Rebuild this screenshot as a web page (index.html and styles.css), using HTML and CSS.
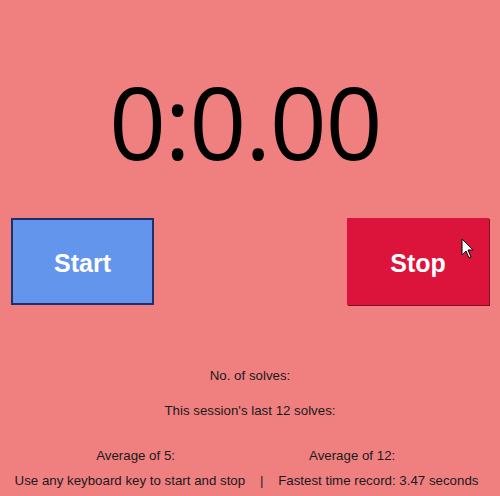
FILE: index.html
```html
<!DOCTYPE html>
<html>
<head>
<meta charset="utf-8">
<link rel="stylesheet" href="styles.css">
</head>
<body>
<div class="app">
  <div class="timer">0:0.00</div>
  <div class="buttons">
    <div class="btn start">Start</div>
    <div class="btn stop">Stop</div>
  </div>
  <div class="info">
    <div class="line solves">No. of solves:</div>
    <div class="line last">This session's last 12 solves:</div>
    <div class="avgs">
      <div class="avg a5">Average of 5:</div>
      <div class="avg a12">Average of 12:</div>
    </div>
    <div class="footer">Use any keyboard key to start and stop&nbsp;&nbsp;&nbsp;&nbsp;|&nbsp;&nbsp;&nbsp;&nbsp;Fastest time record: 3.47 seconds</div>
  </div>
  <svg class="cursor" width="14" height="22" viewBox="0 0 14 22"><path d="M1 1 L1 17 L5 13 L8 20 L10 19 L7 12 L12 12 Z" fill="#fff" stroke="#000" stroke-width="1"/></svg>
</div>
</body>
</html>
```
FILE: styles.css
```css
html, body { margin: 0; padding: 0; }
body { background: #f08080; }
.app {
  position: relative;
  width: 500px;
  height: 496px;
  background: #f08080;
  display: flex;
  flex-direction: column;
  font-family: "Liberation Sans", Arial, sans-serif;
  color: #1a1a1a;
  overflow: hidden;
}
.timer {
  font-family: "Open Sans", "Noto Sans", sans-serif;
  font-size: 100px;
  letter-spacing: -1.5px;
  line-height: 1;
  text-align: center;
  color: #000;
  margin-top: 71px;
  padding-right: 10px;
  height: 100px;
}
.buttons {
  display: flex;
  justify-content: space-between;
  padding: 0 11px;
  margin-top: 47px;
}
.btn {
  width: 143px;
  height: 87px;
  box-sizing: border-box;
  display: flex;
  align-items: center;
  justify-content: center;
  color: #fff;
  font-weight: bold;
  font-size: 25px;
  padding-top: 3px;
}
.start {
  background: #6495ed;
  border: 2px solid #1c2f6e;
}
.stop {
  width: 142px;
  background: #dc143c;
  box-shadow: 1px 1px 0 #7a1020;
  padding-top: 4px;
}
.info {
  display: flex;
  flex-direction: column;
  align-items: center;
  font-size: 13.3px;
  margin-top: 63px;
}
.line { height: 15px; line-height: 15px; }
.last { margin-top: 20px; }
.avgs {
  display: flex;
  width: 100%;
  margin-top: 30px;
  height: 15px;
  line-height: 15px;
}
.avg { position: relative; }
.a5 { width: 50%; text-align: right; padding-right: 75px; box-sizing: border-box; }
.a12 { width: 50%; text-align: left; padding-left: 59px; box-sizing: border-box; }
.footer { margin-top: 10px; height: 15px; line-height: 15px; padding-right: 7px; white-space: nowrap; }
.cursor {
  position: absolute;
  left: 461px;
  top: 238px;
}
```
